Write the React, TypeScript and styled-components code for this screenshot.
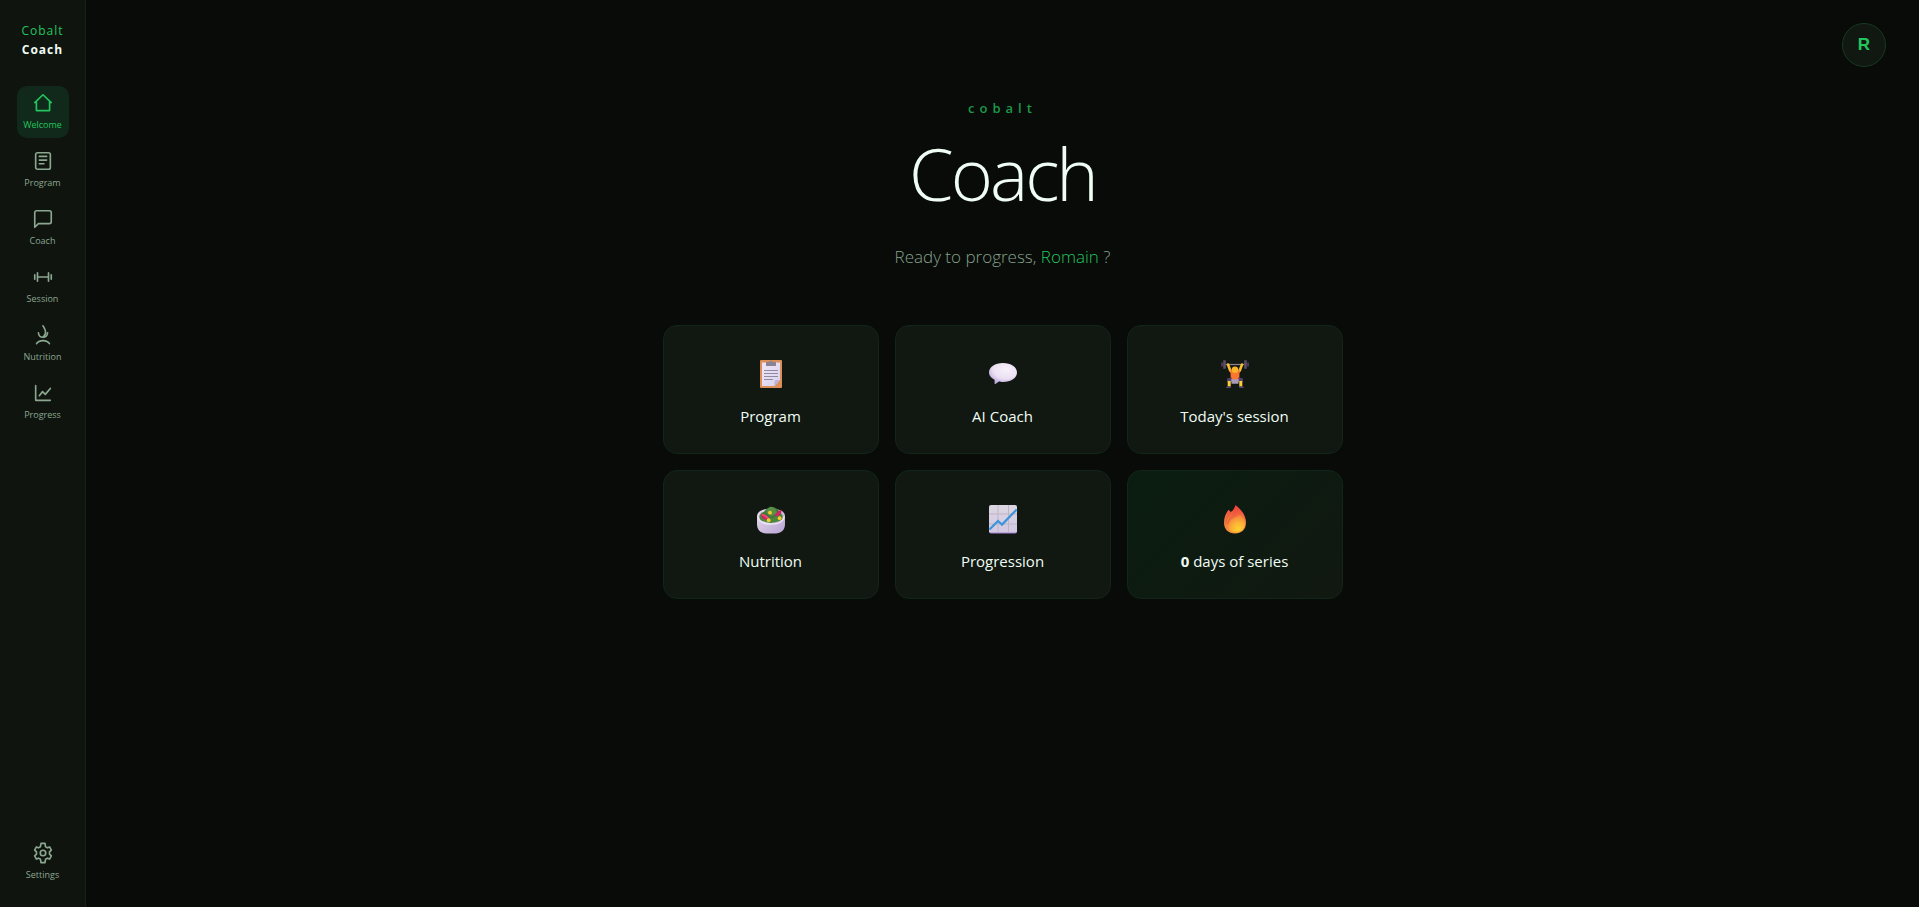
import React from "react";
import styled, { createGlobalStyle, css } from "styled-components";

const GlobalStyle = createGlobalStyle`
  *, *::before, *::after { box-sizing: border-box; }
  body {
    margin: 0;
    background: #080b08;
    color: #f0fdf4;
    font-family: "Segoe UI", "Open Sans", "Noto Sans", sans-serif;
  }
`;

const Shell = styled.div`
  display: flex;
  min-height: 100vh;
`;

const Sidebar = styled.aside`
  display: flex;
  flex-direction: column;
  align-items: center;
  width: 86px;
  flex-shrink: 0;
  padding: 21px 0 19px;
  background: #0f140f;
  border-right: 1px solid #13231a;
`;

const Brand = styled.div`
  display: flex;
  flex-direction: column;
  align-items: center;
  margin-bottom: 27px;
  font-size: 12px;
  line-height: 19px;
  letter-spacing: 1px;
  color: #22c55e;

  strong {
    font-weight: 700;
    color: #f0fdf4;
  }
`;

const Nav = styled.nav`
  display: flex;
  flex: 1;
  flex-direction: column;
  gap: 6px;
`;

const NavItem = styled.a<{ $active?: boolean; $last?: boolean }>`
  display: flex;
  flex-direction: column;
  align-items: center;
  gap: 4px;
  width: 52px;
  height: 52px;
  padding-top: 6px;
  border-radius: 10px;
  font-size: 9px;
  line-height: 14px;
  text-decoration: none;
  color: #8ba78f;
  ${(p) =>
    p.$active &&
    css`
      background: #11291a;
      color: #22c55e;
    `}
  ${(p) =>
    p.$last &&
    css`
      margin-top: auto;
    `}
`;

const NavSvg = styled.svg.attrs({
  viewBox: "0 0 24 24",
  fill: "none",
  stroke: "currentColor",
  strokeWidth: 1.8,
  strokeLinecap: "round",
  strokeLinejoin: "round",
  "aria-hidden": true,
})`
  width: 22px;
  height: 22px;
  flex-shrink: 0;
`;

const Main = styled.main`
  display: flex;
  flex: 1;
  flex-direction: column;
  align-items: center;
  padding: 23px 33px;
`;

const Profile = styled.button`
  align-self: flex-end;
  width: 44px;
  height: 44px;
  padding: 0;
  border: 1px solid #153a22;
  border-radius: 50%;
  background: #111811;
  color: #22c55e;
  font-family: "Liberation Sans", Arial, sans-serif;
  font-size: 17px;
  font-weight: 700;
`;

const Eyebrow = styled.p`
  margin: 31px 0 0;
  font-size: 13px;
  font-weight: 600;
  line-height: 20px;
  letter-spacing: 5px;
  color: #1c994a;
`;

const Title = styled.h1`
  margin: 6px 0 0;
  font-size: 72px;
  font-weight: 300;
  line-height: 98px;
  letter-spacing: -3px;
`;

const Greeting = styled.p`
  margin: 23px 0 0;
  font-size: 17px;
  font-weight: 300;
  line-height: 24px;
  color: #86a08a;

  span {
    color: #22c55e;
  }
`;

const Grid = styled.div`
  display: grid;
  grid-template-columns: repeat(3, 1fr);
  gap: 16px;
  width: 100%;
  max-width: 680px;
  margin-top: 56px;
`;

const Card = styled.button<{ $streak?: boolean }>`
  display: flex;
  flex-direction: column;
  align-items: center;
  gap: 16px;
  padding: 34px 16px 25px;
  border: 1px solid #12251a;
  border-radius: 14px;
  background: ${(p) => (p.$streak ? "linear-gradient(135deg, #0a1d10, #111811)" : "#111811")};
  color: #f0fdf4;
  font-family: inherit;
  font-size: 15px;
  line-height: 24px;
`;

const Pictogram = styled.svg.attrs({ viewBox: "0 0 28 28", "aria-hidden": true })`
  width: 28px;
  height: 28px;
  overflow: visible;
`;

const ClipboardArt = () => (
  <Pictogram>
    <defs>
      <linearGradient id="paper" x1="0" y1="0" x2="1" y2="1">
        <stop offset="0" stopColor="#efe6f7" />
        <stop offset="1" stopColor="#d9d2ee" />
      </linearGradient>
    </defs>
    <rect x="3" y="0" width="22" height="28" rx="1" fill="#dc8f58" />
    <path d="M5 2.500h18v17.500L17.500 26H5z" fill="url(#paper)" />
    <path d="M23 20h-4a1.500 1.500 0 0 0-1.500 1.500V26z" fill="#bdb3d6" />
    <path d="M9 6V2h3.200a2 2 0 0 1 3.600 0H19v4z" fill="#8c8495" />
    <path d="M7 10.500h14M7 13.500h14M7 16.500h14M7 19.500h9" stroke="#918a9e" strokeWidth="1" />
  </Pictogram>
);

const BubbleArt = () => (
  <Pictogram>
    <defs>
      <radialGradient id="bubble" cx="0.6" cy="0.3" r="0.75">
        <stop offset="0" stopColor="#f7f1fa" />
        <stop offset="0.6" stopColor="#ebe0f3" />
        <stop offset="1" stopColor="#b6a2d8" />
      </radialGradient>
    </defs>
    <path
      d="M14 3c8 0 14 4 14 9.500S22 22 14 22c-1.800 0-3-.1-4.200-.4-.9 1-2 1.700-3.400 2.300-.6.200-1-.1-.9-.6.200-1.200.200-2.400 0-3.500C2 18 0 15.500 0 12.500 0 7 6 3 14 3z"
      fill="url(#bubble)"
    />
  </Pictogram>
);

const LifterArt = () => (
  <Pictogram>
    <path d="M3 4.500h22" stroke="#8a8490" strokeWidth="1.200" />
    <path d="M1 2.500v4M27 2.500v4" stroke="#4d4059" strokeWidth="1.800" />
    <path d="M3.500 .2v8.600M24.500 .2v8.600" stroke="#5c4d6a" strokeWidth="2.600" />
    <path d="M7 4.500l2.200 6 2.300 2M21 4.500l-2.200 6-2.300 2" fill="none" stroke="#f7c12d" strokeWidth="2.600" strokeLinecap="round" />
    <path d="M9.400 9.500h9.200L18.200 20H9.800z" fill="#fb7430" />
    <circle cx="14" cy="9.700" r="3.200" fill="#f9b529" />
    <path d="M6 18.500l4.500-1.100 1 4-5.300.8zM22 18.500l-4.500-1.100-1 4 5.300.8z" fill="#52416b" />
    <path d="M10 19.300h8l-.6 4.400h-6.800z" fill="#a99abb" />
    <path d="M8.200 21v5.700M19.800 21v5.700" stroke="#fbd037" strokeWidth="3" />
    <path d="M5 28c0-1.400 1.500-1.700 4.800-1.700V28zM23 28c0-1.400-1.500-1.700-4.800-1.700V28z" fill="#56426d" />
  </Pictogram>
);

const SaladArt = () => (
  <Pictogram>
    <defs>
      <linearGradient id="bowl" x1="0" y1="0" x2="1" y2="1">
        <stop offset="0" stopColor="#e6dded" />
        <stop offset="1" stopColor="#b9a4d4" />
      </linearGradient>
    </defs>
    <path d="M0 11c0-4.600 6.200-7.500 14-7.500S28 6.400 28 11v8c0 6-4 9.500-9.500 9.500h-9C4 28.500 0 25 0 19z" fill="url(#bowl)" />
    <path d="M.8 11.500C1.500 16.500 6.500 19 14 19s12.500-2.500 13.200-7.500" fill="none" stroke="#ece5f2" strokeWidth="1.500" />
    <ellipse cx="14" cy="11.700" rx="11.700" ry="6.200" fill="#4c873b" />
    <path d="M5 10c2-4 5-6.500 8-8.200C18.500 1.500 22 5 23 8l-7 5H6z" fill="#42783d" />
    <path d="M10 5c2-4 6.500-4 8.500-.5L20 8l-5 3-6-3z" fill="#5a9043" />
    <path d="M4 8.500c3 0 6.500 2.500 8.500 5-2.500 1.700-6.500 1.500-8 -1.200zM24.300 4.500c.7 4.500-1.300 7.500-6.300 6.700-.6-1.400 2-4.700 6.300-6.700z" fill="#c92960" />
    <path d="M4.500 8.700c3 .4 6.200 2.300 7.800 4.600l-2.300.3C8 11.500 6 10.300 4.300 10z" fill="#f04c7b" />
    <circle cx="13" cy="7.700" r="1.900" fill="#f7cd2a" />
    <circle cx="11.700" cy="15.200" r="1.900" fill="#f7cd2a" />
    <circle cx="22.600" cy="13.200" r="1.900" fill="#f7cd2a" />
  </Pictogram>
);

const ChartArt = () => (
  <Pictogram>
    <defs>
      <linearGradient id="sheet" x1="0" y1="0" x2="0" y2="1">
        <stop offset="0" stopColor="#dcd6e2" />
        <stop offset="0.93" stopColor="#d3c9e3" />
        <stop offset="1" stopColor="#a87fd0" />
      </linearGradient>
    </defs>
    <rect x="0" y="0" width="28" height="28.500" rx="2" fill="url(#sheet)" />
    <path d="M9 0v27.500M19.500 0v27.500M0 9h28M0 19h28" stroke="#bdb5c6" strokeWidth="1" />
    <path d="M.5 24.500L9 16l4 3.600L27.700 4.500" fill="none" stroke="#3b94dc" strokeWidth="2.200" />
  </Pictogram>
);

const FlameArt = () => (
  <Pictogram>
    <defs>
      <linearGradient id="flame" x1="0.5" y1="0" x2="0.5" y2="1">
        <stop offset="0" stopColor="#ef3b3d" />
        <stop offset="0.5" stopColor="#f47640" />
        <stop offset="1" stopColor="#f8933c" />
      </linearGradient>
      <radialGradient id="ember" cx="0.6" cy="0.8" r="0.8">
        <stop offset="0" stopColor="#fdd130" />
        <stop offset="0.45" stopColor="#fcb236" />
        <stop offset="1" stopColor="#f47a3d" />
      </radialGradient>
    </defs>
    <path
      d="M14.500 0C19 3.500 25 9.500 25 17.500 25 24.500 20.500 28.500 14 28.500S3 24.500 3 17.500C3 12 5 8.500 7 5.500c.4-.6 1-.6 1.300 0L9.800 7C12 6 13.500 3 14.500 0z"
      fill="url(#flame)"
    />
    <path d="M19 9.500c3 2.500 5 5 5 9 0 5.500-4 9-9 9s-8-3-8-7c0-5 6-7 12-11z" fill="url(#ember)" />
    <path d="M9.800 7C7.500 10.500 5 13 4.600 18.500M14.500 7.500C12 11.500 7.500 13.500 6.600 19.500" fill="none" stroke="#d95a3c" strokeWidth="0.8" />
  </Pictogram>
);

const navItems = [
  {
    label: "Welcome",
    art: <path d="M3 11.500L12 3l9 8.500M4.800 10v10.300h14.400V10" />,
  },
  {
    label: "Program",
    art: (
      <>
        <rect x="4" y="3" width="16" height="18" rx="2" />
        <path d="M8 7h8M8 11h8M8 15h5" />
      </>
    ),
  },
  {
    label: "Coach",
    art: <path d="M21 15a2 2 0 0 1-2 2H7l-4 4V5a2 2 0 0 1 2-2h14a2 2 0 0 1 2 2z" />,
  },
  {
    label: "Session",
    art: <path d="M6 12h12M6 7.500v9M18 7.500v9M3 9.500v5M21 9.500v5" />,
  },
  {
    label: "Nutrition",
    art: <path d="M12 2c2.200 3.800 5 7.800 0 12.500M7 9.500c.3 3 2.200 5 5 5s4.700-2 5-5M5 21.500c2.500-4.500 11.500-4.500 14 0" />,
  },
  {
    label: "Progress",
    art: <path d="M4 4v16h16M8 15l3.500-4.500 3 3L20 7" />,
  },
];

const cards = [
  { art: <ClipboardArt />, label: "Program" },
  { art: <BubbleArt />, label: "AI Coach" },
  { art: <LifterArt />, label: "Today's session" },
  { art: <SaladArt />, label: "Nutrition" },
  { art: <ChartArt />, label: "Progression" },
];

export default function App() {
  return (
    <>
      <GlobalStyle />
      <Shell>
        <Sidebar>
          <Brand>
            <span>Cobalt</span>
            <strong>Coach</strong>
          </Brand>
          <Nav aria-label="Main">
            {navItems.map((item, i) => (
              <NavItem key={item.label} href="#" $active={i === 0} aria-current={i === 0 ? "page" : undefined}>
                <NavSvg>{item.art}</NavSvg>
                {item.label}
              </NavItem>
            ))}
            <NavItem href="#" $last>
              <NavSvg>
                <circle cx="12" cy="12" r="3" />
                <path d="M9.800 1.500h4.400l.6 3.700 2.100 1.200 2.300-1 1.900 3.400-2 1.900v2.600l2 1.900-1.900 3.400-2.300-1-2.100 1.200-.6 3.700H9.800l-.6-3.700-2.100-1.200-2.300 1-1.900-3.400 2-1.900v-2.600l-2-1.900 1.900-3.400 2.300 1 2.100-1.200z" />
              </NavSvg>
              Settings
            </NavItem>
          </Nav>
        </Sidebar>
        <Main>
          <Profile type="button" aria-label="Profile">
            R
          </Profile>
          <Eyebrow>cobalt</Eyebrow>
          <Title>Coach</Title>
          <Greeting>
            Ready to progress, <span>Romain</span> ?
          </Greeting>
          <Grid>
            {cards.map((card) => (
              <Card key={card.label} type="button">
                {card.art}
                <span>{card.label}</span>
              </Card>
            ))}
            <Card type="button" $streak>
              <FlameArt />
              <span>
                <strong>0</strong> days of series
              </span>
            </Card>
          </Grid>
        </Main>
      </Shell>
    </>
  );
}
